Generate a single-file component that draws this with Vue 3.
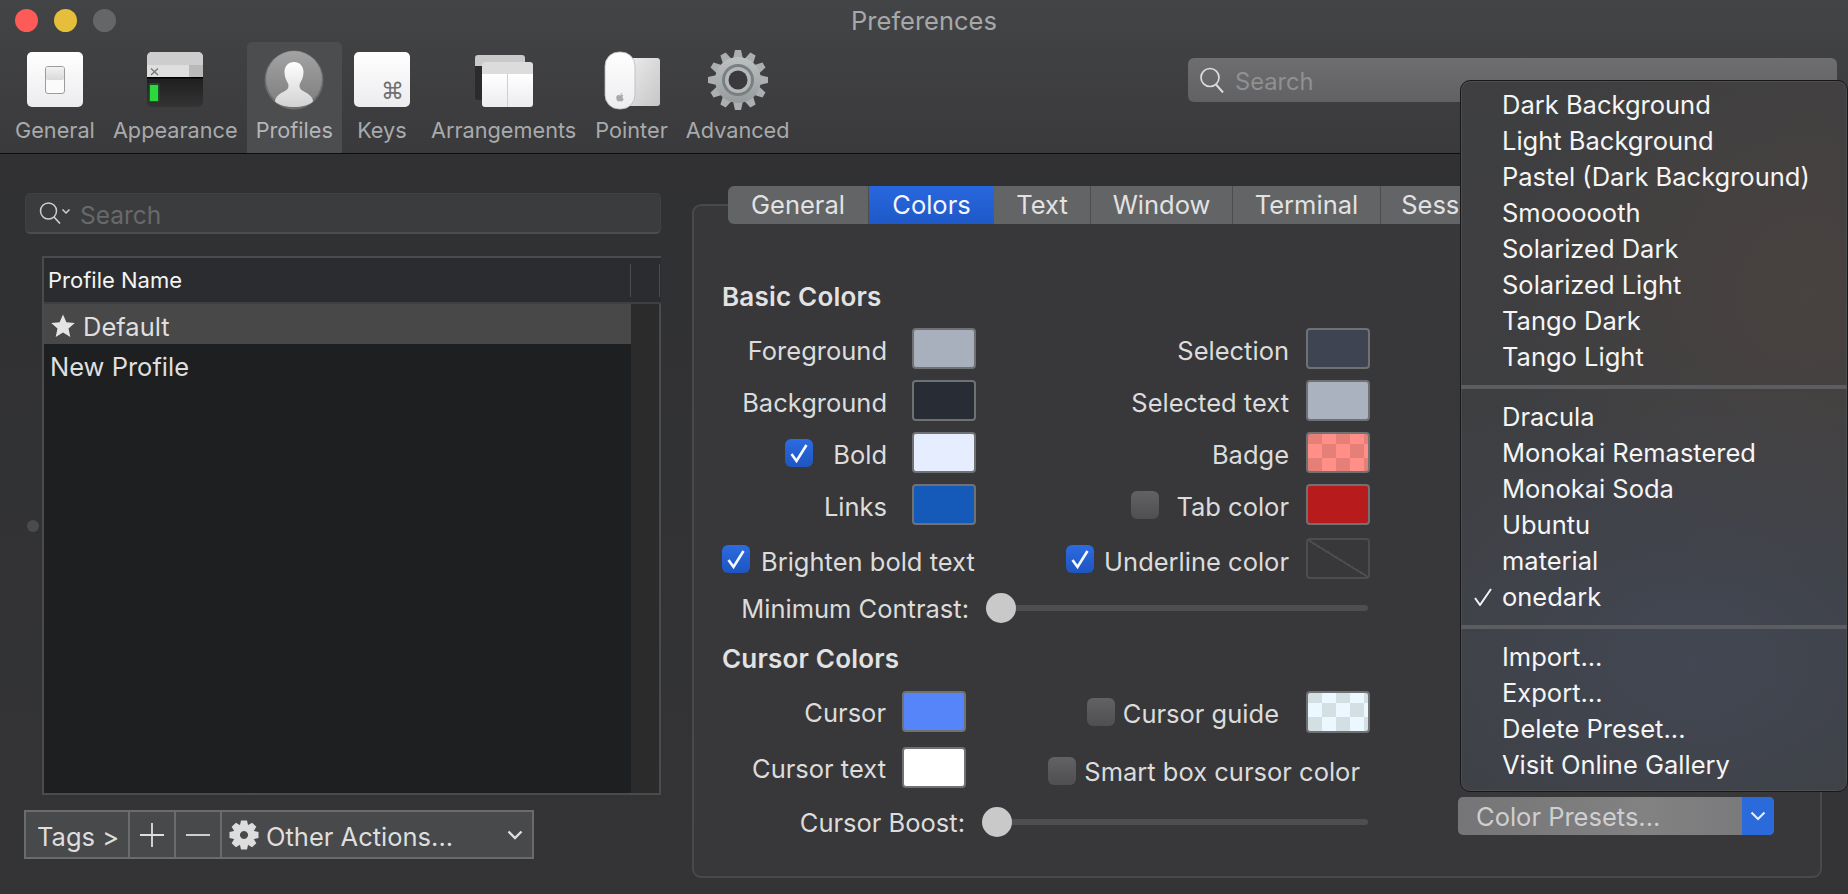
<template>
  <div class="window">
    <header class="header">
      <div class="titlebar">
        <div class="lights">
          <span class="light red"></span>
          <span class="light yellow"></span>
          <span class="light gray"></span>
        </div>
        <div class="title">Preferences</div>
      </div>
      <div class="toolbar">
        <div class="tool">
          <svg class="tool-icon" viewBox="0 0 60 60">
            <defs>
              <linearGradient id="keyWhite" x1="0" y1="0" x2="0" y2="1">
                <stop offset="0" stop-color="#ffffff" />
                <stop offset="1" stop-color="#ececef" />
              </linearGradient>
              <linearGradient id="switchTop" x1="0" y1="0" x2="0" y2="1">
                <stop offset="0" stop-color="#f2f2f2" />
                <stop offset="1" stop-color="#d9d9d9" />
              </linearGradient>
            </defs>
            <rect x="2" y="2" width="56" height="55" rx="5" fill="url(#keyWhite)" />
            <rect x="20.5" y="16.5" width="19" height="27" rx="2.5" fill="#fbfbfb" stroke="#9c9c9c" />
            <rect x="21" y="17" width="18" height="13" rx="2" fill="url(#switchTop)" />
          </svg>
          <span>General</span>
        </div>
        <div class="tool">
          <svg class="tool-icon" viewBox="0 0 60 60">
            <defs>
              <linearGradient id="termBody" x1="0" y1="0" x2="0" y2="1">
                <stop offset="0" stop-color="#1f1f1f" />
                <stop offset="1" stop-color="#333333" />
              </linearGradient>
            </defs>
            <path d="M2 28V7a5 5 0 0 1 5-5h46a5 5 0 0 1 5 5v21z" fill="#dedede" />
            <path d="M2 15V7a5 5 0 0 1 5-5h46a5 5 0 0 1 5 5v8z" fill="#cdcdcd" />
            <rect x="44" y="15" width="14" height="13" fill="#b9b9b9" />
            <path d="M6 18.500l7 6.500M13 18.500l-7 6.500" stroke="#777" stroke-width="1.300" fill="none" />
            <path d="M2 28h56v24a5 5 0 0 1-5 5H7a5 5 0 0 1-5-5z" fill="url(#termBody)" />
            <rect x="2" y="27" width="56" height="1.500" fill="#000" />
            <rect x="3.500" y="33" width="11" height="19" rx="1.500" fill="#1f7a2b" opacity=".45" />
            <rect x="5" y="35" width="8" height="16" fill="#2bd93f" />
          </svg>
          <span>Appearance</span>
        </div>
        <div class="tool active">
          <svg class="tool-icon" viewBox="0 0 60 60">
            <defs>
              <linearGradient id="avatarBg" x1="0" y1="0" x2="0" y2="1">
                <stop offset="0" stop-color="#a3a3a3" />
                <stop offset="1" stop-color="#7d7d7d" />
              </linearGradient>
              <linearGradient id="avatarFg" x1="0" y1="0" x2="0" y2="1">
                <stop offset="0" stop-color="#ffffff" />
                <stop offset="1" stop-color="#d2d2d2" />
              </linearGradient>
            </defs>
            <circle cx="30" cy="30" r="29.500" fill="#6d6d6d" />
            <circle cx="30" cy="29" r="28" fill="url(#avatarBg)" />
            <path
              d="M30 12c-5.500 0-9.500 4-9.500 10 0 4.500 1.500 8 3.500 11.500.8 1.500.6 4-.5 5.500-2.500 2.500-7 3.500-10.500 7.500-1.300 1.500-1.800 3-2 5 4.500 4 11 5.500 19 5.500s14.500-1.500 19-5.500c-.2-2-.7-3.500-2-5-3.500-4-8-5-10.500-7.500-1.100-1.500-1.300-4-.5-5.500 2-3.500 3.500-7 3.500-11.500 0-6-4-10-9.500-10z"
              fill="url(#avatarFg)"
            />
          </svg>
          <span>Profiles</span>
        </div>
        <div class="tool keys">
          <svg class="tool-icon" viewBox="0 0 60 60">
            <rect x="2" y="2" width="56" height="55" rx="5" fill="url(#keyWhite)" />
            <text x="40.500" y="49" text-anchor="middle" class="cmd">⌘</text>
          </svg>
          <span>Keys</span>
        </div>
        <div class="tool arrange">
          <svg class="tool-icon" viewBox="0 0 60 60">
            <path d="M1 8a3 3 0 0 1 3-3h44a3 3 0 0 1 3 3v12H1z" fill="#c9c9c9" />
            <path d="M1 16h12v34H4a3 3 0 0 1-3-3z" fill="#2b2b2b" />
            <path d="M8 15a3 3 0 0 1 3-3h45a3 3 0 0 1 3 3v10H8z" fill="#dcdcdc" />
            <path d="M8 24h51v30a3 3 0 0 1-3 3H11a3 3 0 0 1-3-3z" fill="url(#keyWhite)" />
            <rect x="33" y="24" width="1" height="33" fill="#cfcfcf" />
          </svg>
          <span>Arrangements</span>
        </div>
        <div class="tool">
          <svg class="tool-icon" viewBox="0 0 60 60">
            <defs>
              <linearGradient id="padFill" x1="0" y1="0" x2="1" y2="1">
                <stop offset="0" stop-color="#ececec" />
                <stop offset="1" stop-color="#c6c6c6" />
              </linearGradient>
            </defs>
            <rect x="25" y="8" width="33" height="48" rx="3" fill="url(#padFill)" />
            <rect x="3" y="2" width="30" height="57" rx="14" fill="url(#keyWhite)" stroke="#b8b8b8" stroke-width=".8" />
            <path d="M18.500 45.500c.9-.9 2.300-.8 2.800 0-1.300.9-1 2.900.4 3.400-.5 1.300-1.400 2.600-2.300 2.500-.7 0-.9-.4-1.500-.4s-.9.400-1.500.4c-1.500 0-3.300-4.500-1.200-6 1-.8 2.100-.5 3.300 0zM18.400 45c-.1-1 .8-2 1.700-2 .1 1-.8 2.100-1.700 2z" fill="#a8a8a8" />
          </svg>
          <span>Pointer</span>
        </div>
        <div class="tool">
          <svg class="tool-icon" viewBox="0 0 60 60">
            <defs>
              <linearGradient id="gearFill" x1="0" y1="0" x2="0" y2="1">
                <stop offset="0" stop-color="#bdc1c2" />
                <stop offset="1" stop-color="#979b9d" />
              </linearGradient>
            </defs>
            <g transform="translate(30 30)">
              <polygon
                v-for="deg in bigTeeth"
                :key="deg"
                points="-5,-21 -3,-30 3,-30 5,-21"
                :transform="`rotate(${deg})`"
                fill="#abafb0"
              />
              <circle r="23" fill="url(#gearFill)" />
              <circle r="16" fill="#7a7f81" />
              <circle r="13" fill="#b4b8b9" />
              <circle r="9.500" fill="#3a3a3c" />
            </g>
          </svg>
          <span>Advanced</span>
        </div>
        <div class="top-search">
          <svg class="top-search-icon" viewBox="0 0 26 26">
            <circle cx="11" cy="10.500" r="9" fill="none" stroke="#dcdcdc" stroke-width="1.700" />
            <path d="M17 17.500l7 8" stroke="#dcdcdc" stroke-width="2" fill="none" />
          </svg>
          <span>Search</span>
        </div>
      </div>
    </header>

    <main class="content">
      <section class="profiles">
        <div class="profile-search">
          <svg class="profile-search-icon" viewBox="0 0 32 22">
            <circle cx="9.500" cy="9" r="8" fill="none" stroke="#cfcfcf" stroke-width="1.500" />
            <path d="M15 15l6 6.500" stroke="#cfcfcf" stroke-width="1.700" fill="none" />
            <path d="M23.500 7.500l3.500 3.500 3.500-3.500" stroke="#cfcfcf" stroke-width="1.500" fill="none" />
          </svg>
          <span>Search</span>
        </div>
        <div class="table-wrap">
          <span class="split-dot"></span>
          <div class="table">
            <div class="table-head">
              <span>Profile Name</span>
              <i class="col-line first"></i>
              <i class="col-line"></i>
            </div>
            <div class="table-body">
              <div class="rows">
                <div class="row selected">
                  <svg class="star" viewBox="0 0 24 24">
                    <polygon points="12,0.500 15.400,8.200 23.800,9 17.500,14.600 19.300,22.900 12,18.600 4.700,22.900 6.500,14.600 0.200,9 8.600,8.200" fill="#e4e4e4" />
                  </svg>
                  <span>Default</span>
                </div>
                <div class="row">New Profile</div>
              </div>
              <div class="table-strip"></div>
            </div>
          </div>
        </div>
        <div class="actions">
          <div class="action tags">Tags &gt;</div>
          <div class="action sign">
            <svg viewBox="0 0 24 24" width="24" height="24"><path d="M12 0v24M0 12h24" stroke="#dedede" stroke-width="1.800" /></svg>
          </div>
          <div class="action sign">
            <svg viewBox="0 0 24 24" width="24" height="24"><path d="M0 12h24" stroke="#dedede" stroke-width="1.800" /></svg>
          </div>
          <div class="action other">
            <svg class="other-gear" viewBox="0 0 30 30">
              <g transform="translate(15 15)">
                <polygon
                  v-for="deg in smallTeeth"
                  :key="deg"
                  points="-4,-10 -3,-14.500 3,-14.500 4,-10"
                  :transform="`rotate(${deg})`"
                  fill="#dddddd"
                />
                <path fill-rule="evenodd" d="M0-11a11 11 0 1 0 .01 0zM0-4a4 4 0 1 1-.01 0z" fill="#dddddd" />
              </g>
            </svg>
            <span>Other Actions...</span>
            <svg class="other-chev" viewBox="0 0 16 10">
              <path d="M1.500 1.500L8 8l6.500-6.500" stroke="#dedede" stroke-width="2.400" fill="none" />
            </svg>
          </div>
        </div>
      </section>

      <section class="detail">
        <div class="tabs">
          <div v-for="tab in tabs" :key="tab.name" class="tab" :class="{ on: tab.on }" :style="{ width: tab.width + 'px' }">
            {{ tab.name }}
          </div>
        </div>
        <div class="panel-body">
          <div class="colors">
            <h3 class="heading">Basic Colors</h3>
            <div class="pairs basic">
              <div class="field">
                <span class="label">Foreground</span>
                <span class="swatch fg"></span>
              </div>
              <div class="field right">
                <span class="label">Selection</span>
                <span class="swatch sel"></span>
              </div>
              <div class="field">
                <span class="label">Background</span>
                <span class="swatch bg"></span>
              </div>
              <div class="field right">
                <span class="label">Selected text</span>
                <span class="swatch seltext"></span>
              </div>
              <div class="field">
                <span class="check on bold-check"><svg viewBox="0 0 28 28"><path d="M6.500 15l5 7L21.500 6" /></svg></span>
                <span class="label">Bold</span>
                <span class="swatch boldc"></span>
              </div>
              <div class="field right">
                <span class="label">Badge</span>
                <span class="swatch badge"></span>
              </div>
              <div class="field">
                <span class="label">Links</span>
                <span class="swatch links"></span>
              </div>
              <div class="field right">
                <span class="check"></span>
                <span class="label">Tab color</span>
                <span class="swatch tabc"></span>
              </div>
            </div>
            <div class="pairs basic under">
              <div class="field">
                <span class="check on"><svg viewBox="0 0 28 28"><path d="M6.500 15l5 7L21.500 6" /></svg></span>
                <span class="label">Brighten bold text</span>
              </div>
              <div class="field right">
                <span class="check on"><svg viewBox="0 0 28 28"><path d="M6.500 15l5 7L21.500 6" /></svg></span>
                <span class="label">Underline color</span>
                <span class="swatch none"></span>
              </div>
            </div>
            <div class="slider-row contrast">
              <span class="label">Minimum Contrast:</span>
              <div class="track"><span class="knob"></span></div>
            </div>

            <h3 class="heading cursor-heading">Cursor Colors</h3>
            <div class="pairs cursors">
              <div class="field small">
                <span class="label">Cursor</span>
                <span class="swatch cursorc"></span>
              </div>
              <div class="field guide">
                <span class="check"></span>
                <span class="label">Cursor guide</span>
                <span class="swatch guidec"></span>
              </div>
              <div class="field small">
                <span class="label">Cursor text</span>
                <span class="swatch cursortext"></span>
              </div>
              <div class="field smart">
                <span class="check"></span>
                <span class="label">Smart box cursor color</span>
              </div>
            </div>
            <div class="slider-row boost">
              <span class="label">Cursor Boost:</span>
              <div class="track"><span class="knob"></span></div>
            </div>
          </div>

          <div class="presets">
            <span class="presets-text">Color Presets...</span>
            <span class="presets-arrow">
              <svg viewBox="0 0 16 10" width="16" height="10"><path d="M1.500 1.500L8 8l6.500-6.500" stroke="#e4edff" stroke-width="2.200" fill="none" /></svg>
            </span>
          </div>
        </div>
      </section>
    </main>

    <div class="menu">
      <template v-for="(group, g) in menu" :key="g">
        <div v-if="g > 0" class="menu-sep"></div>
        <div v-for="item in group" :key="item" class="menu-item">
          <svg v-if="item === 'onedark'" class="tick" viewBox="0 0 18 18">
            <path d="M1 10l5 7L17 1" stroke="#f2f2f2" stroke-width="2" fill="none" />
          </svg>
          {{ item }}
        </div>
      </template>
    </div>
  </div>
</template>

<script setup>
const bigTeeth = Array.from({ length: 12 }, (_, i) => i * 30)
const smallTeeth = Array.from({ length: 8 }, (_, i) => i * 45)

const tabs = [
  { name: 'General', width: 141 },
  { name: 'Colors', width: 125, on: true },
  { name: 'Text', width: 97 },
  { name: 'Window', width: 142 },
  { name: 'Terminal', width: 148 },
  { name: 'Session', width: 136 }
]

const menu = [
  ['Dark Background', 'Light Background', 'Pastel (Dark Background)', 'Smoooooth', 'Solarized Dark', 'Solarized Light', 'Tango Dark', 'Tango Light'],
  ['Dracula', 'Monokai Remastered', 'Monokai Soda', 'Ubuntu', 'material', 'onedark'],
  ['Import...', 'Export...', 'Delete Preset...', 'Visit Online Gallery']
]
</script>

<style>
html,
body {
  margin: 0;
  background: #2b2b2d;
  overflow: hidden;
}
</style>

<style scoped>
.window {
  position: relative;
  width: 1848px;
  height: 894px;
  overflow: hidden;
  display: flex;
  flex-direction: column;
  background: linear-gradient(#2f3032, #343436);
  font-family: Inter, "Liberation Sans", sans-serif;
  font-size: 25.5px;
  color: #dcdcdc;
}

/* title + toolbar */
.header {
  height: 153px;
  flex-shrink: 0;
  border-bottom: 1px solid #0e0e0f;
  background: linear-gradient(#434446, #3a3a3c);
}

.titlebar {
  height: 42px;
  display: grid;
  grid-template-columns: 1fr auto 1fr;
  align-items: center;
}

.lights {
  display: flex;
  gap: 16px;
  padding-left: 15px;
  margin-top: -2px;
}

.light {
  width: 23px;
  height: 23px;
  border-radius: 50%;
}
.light.red { background: #fc5b57; }
.light.yellow { background: #e5bf3c; }
.light.gray { background: #656667; }

.title {
  color: #a6a8a9;
  font-size: 25.5px;
  margin-top: -1px;
}

.toolbar {
  display: flex;
  height: 111px;
  padding-left: 6px;
}

.tool {
  height: 111px;
  padding: 0 9px;
  display: flex;
  flex-direction: column;
  align-items: center;
  color: #a8aaab;
  font-size: 21.7px;
  box-sizing: border-box;
}

.tool.keys {
  margin: 0 1px;
}

.tool.arrange {
  margin-right: 1px;
}

.tool.active {
  background: #4c4d4f;
  border-radius: 5px 5px 0 0;
  color: #b4b6b7;
}

.tool span {
  margin-top: 4px;
  line-height: 32px;
}

.tool-icon {
  width: 60px;
  height: 60px;
  margin-top: 8px;
}

.cmd {
  font-family: "DejaVu Sans", sans-serif;
  font-size: 23px;
  fill: #6f6f6f;
}

.top-search {
  margin: 16px 11px 0 auto;
  width: 649px;
  height: 44px;
  box-sizing: border-box;
  padding-left: 11px;
  display: flex;
  align-items: center;
  gap: 10px;
  background: linear-gradient(#6e6e70, #616163);
  border-radius: 6px;
  color: #8f9091;
  font-size: 23.7px;
}

.top-search span {
  margin-top: 3px;
}

.top-search-icon {
  width: 26px;
  height: 26px;
}

/* main area */
.content {
  flex: 1;
  display: flex;
  min-height: 0;
}

.profiles {
  width: 636px;
  margin-left: 25px;
  padding-top: 39px;
}

.profile-search {
  height: 41px;
  box-sizing: border-box;
  padding-left: 13px;
  display: flex;
  align-items: center;
  gap: 9px;
  background: #3b3c3e;
  border: 1px solid #404143;
  border-bottom: 2px solid #4c4d4f;
  border-radius: 5px;
  color: #68696a;
  font-size: 24.5px;
}

.profile-search span {
  margin-top: 3px;
}

.profile-search-icon {
  width: 32px;
  height: 22px;
}

.table-wrap {
  display: flex;
  align-items: center;
  margin-top: 22px;
}

.split-dot {
  width: 12px;
  height: 12px;
  border-radius: 50%;
  background: #4a4b4d;
  margin: 0 3px 0 2px;
}

.table {
  width: 619px;
  height: 539px;
  box-sizing: border-box;
  display: flex;
  flex-direction: column;
  border: 2px solid #4a4b4d;
  border-right: none;
  background: #1e1f21;
}

.table-head {
  height: 46px;
  flex-shrink: 0;
  box-sizing: border-box;
  display: flex;
  align-items: center;
  padding-left: 4px;
  background: #2b2c2f;
  color: #f4f4f4;
  font-size: 22px;
  border-bottom: 2px solid #3e3f41;
}

.col-line {
  width: 1px;
  height: 33px;
  background: #4c4d4f;
  margin-left: auto;
}
.col-line.first {
  margin-right: 28px;
}
.col-line:last-child {
  margin-left: 0;
  margin-right: 1px;
}

.table-body {
  flex: 1;
  display: flex;
  min-height: 0;
  border-right: 2px solid #4a4b4d;
}

.rows {
  flex: 1;
}

.table-strip {
  width: 28px;
  background: #2b2b2c;
}

.row {
  height: 40px;
  box-sizing: border-box;
  display: flex;
  align-items: center;
  gap: 8px;
  padding: 4px 0 0 6px;
  font-size: 25.5px;
  color: #dfdfdf;
}

.row.selected {
  background: #484848;
}

.star {
  width: 24px;
  height: 24px;
  margin-left: 1px;
}

.actions {
  display: flex;
  width: 510px;
  height: 49px;
  box-sizing: border-box;
  margin-top: 15px;
  margin-left: -1px;
  border: 2px solid #6a6b6d;
  background: #48494b;
}

.action {
  display: flex;
  align-items: center;
  box-sizing: border-box;
  border-right: 2px solid #6a6b6d;
  font-size: 25.5px;
  color: #dedede;
}

.action span {
  margin-top: 3px;
}

.tags {
  width: 104px;
  padding: 3px 0 0 11px;
}

.sign {
  width: 46px;
  justify-content: center;
}

.other {
  flex: 1;
  border-right: none;
  padding-left: 7px;
  gap: 7px;
}

.other-gear {
  width: 30px;
  height: 30px;
}

.other-chev {
  width: 16px;
  height: 10px;
  margin-left: auto;
  margin-right: 9px;
}

/* right panel */
.detail {
  width: 1130px;
  height: 674px;
  box-sizing: border-box;
  margin: 50px 0 0 31px;
  background: #38383a;
  border: 2px solid #48494b;
  border-radius: 9px;
}

.tabs {
  display: flex;
  height: 38px;
  margin: -20px 0 0 34px;
}

.tab {
  box-sizing: border-box;
  display: flex;
  align-items: center;
  justify-content: center;
  padding-bottom: 2px;
  background: #636466;
  border-right: 1px solid #4c4d4f;
  font-size: 25.5px;
  color: #e2e2e2;
  flex-shrink: 0;
}
.tab:first-child {
  border-radius: 6px 0 0 6px;
}
.tab.on {
  background: linear-gradient(#2767de, #1f59c8);
  color: #f2f6ff;
  border-right: none;
}

.panel-body {
  display: flex;
  height: 634px;
}

.colors {
  width: 647px;
  margin-left: 29px;
  flex-shrink: 0;
}

.heading {
  margin: 0 0 0 -1px;
  height: 30px;
  line-height: 30px;
  font-size: 26px;
  letter-spacing: 0.2px;
  font-weight: 600;
  color: #e2e2e2;
}

.colors > .heading:first-child {
  margin-top: 58px;
  margin-bottom: 11px;
}

.pairs {
  display: grid;
  row-gap: 1px;
}
.pairs.basic {
  grid-template-columns: 253px 394px;
}
.pairs.under {
  margin-top: 3px;
}
.pairs.cursors {
  grid-template-columns: 243px 404px;
  margin-top: 12px;
  row-gap: 5px;
}

.field {
  height: 51px;
  display: flex;
  align-items: center;
  justify-content: flex-end;
  gap: 25px;
}
.field.right {
  gap: 17px;
}
.field.small {
  gap: 16px;
}
.field.small .label {
  margin-top: 2px;
}
.field.guide {
  gap: 8px;
}
.field.guide .swatch {
  margin-left: 19px;
  height: 42px;
}
.field.smart {
  gap: 8px;
  padding: 5px 10px 0 0;
  box-sizing: border-box;
}

.label {
  margin-top: 3px;
  white-space: nowrap;
}
.under .label {
  margin-top: 5px;
}
.under .field {
  gap: 11px;
}
.under .field:first-child {
  justify-content: flex-start;
  margin-left: -1px;
}
.under .field.right {
  gap: 10px;
}
.under .field.right .swatch {
  margin-left: 7px;
}
.bold-check {
  margin-right: -5px;
}

.swatch {
  width: 64px;
  height: 41px;
  box-sizing: border-box;
  border: 2px solid #707173;
  border-radius: 4px;
  flex-shrink: 0;
}
.swatch.fg { background: #a9b0bd; }
.swatch.sel { background: #3e4451; }
.swatch.bg { background: #282c34; }
.swatch.seltext { background: #abb2bf; }
.swatch.boldc { background: #e6edff; }
.swatch.links { background: #155ab9; }
.swatch.tabc { background: #b81b1b; }
.swatch.cursorc { background: #5685fa; }
.swatch.cursortext { background: #ffffff; }
.swatch.badge {
  background: conic-gradient(#ff8f87 25%, #e57f78 0 50%, #ff8f87 0 75%, #e57f78 0) 0 -4px / 28px 28px;
}
.swatch.guidec {
  background: conic-gradient(#ebf8ff 25%, #d4dfe4 0 50%, #ebf8ff 0 75%, #d4dfe4 0) 0 -4px / 28px 28px;
}
.swatch.none {
  border-color: #4c4d4f;
  background: linear-gradient(to top right, transparent calc(50% - 1px), #4c4d4f calc(50% - 1px), #4c4d4f calc(50% + 1px), transparent calc(50% + 1px));
}

.check {
  width: 28px;
  height: 28px;
  border-radius: 6px;
  flex-shrink: 0;
  background: linear-gradient(#626264, #4f4f51);
  margin-top: 1px;
}
.check.on {
  background: linear-gradient(#2c6be2, #1e55c0);
}
.check svg {
  display: block;
}
.check path {
  fill: none;
  stroke: #f6f9ff;
  stroke-width: 2.600;
}

.slider-row {
  display: flex;
  align-items: center;
  gap: 17px;
  height: 30px;
}
.slider-row .label {
  margin-top: 0;
  text-align: right;
}
.contrast {
  margin-top: 9px;
}
.contrast .label {
  width: 246px;
}
.contrast .track {
  width: 382px;
}
.boost {
  margin-top: 14px;
}
.boost .label {
  width: 242px;
}
.boost .track {
  width: 386px;
}

.track {
  height: 6px;
  display: flex;
  align-items: center;
  border-radius: 3px;
  background: #4e4e50;
}

.knob {
  width: 30px;
  height: 30px;
  border-radius: 50%;
  background: #c9c9c9;
  flex-shrink: 0;
}

.cursor-heading {
  margin-top: 21px;
}

.presets {
  display: flex;
  align-self: flex-end;
  width: 316px;
  height: 38px;
  margin: 0 0 23px 88px;
  border-radius: 5px;
  overflow: hidden;
  flex-shrink: 0;
  background: linear-gradient(90deg, #757577, #828283 60%, #777779);
  color: #cfcfcf;
  font-size: 25.5px;
}

.presets-text {
  flex: 1;
  display: flex;
  align-items: center;
  padding-left: 18px;
}

.presets-arrow {
  width: 32px;
  display: flex;
  align-items: center;
  justify-content: center;
  background: #2b6adb;
}

/* popup menu */
.menu {
  position: absolute;
  left: 1460px;
  top: 80px;
  width: 388px;
  height: 712px;
  box-sizing: border-box;
  padding: 6px 0;
  border: 1px solid #17181a;
  border-radius: 10px;
  background:
    radial-gradient(420px 300px at 60% 82%, rgba(72, 78, 98, 0.55), transparent),
    radial-gradient(300px 300px at 90% 30%, rgba(84, 70, 62, 0.45), transparent),
    linear-gradient(#3f3f41, #3c3e40);
  color: #f5f5f5;
  font-size: 25.5px;
  box-shadow: inset 0 0 0 1px #4d4e50;
}

.menu-item {
  position: relative;
  height: 36px;
  line-height: 36px;
  padding-left: 41px;
  white-space: nowrap;
}

.tick {
  position: absolute;
  left: 13px;
  top: 9px;
  width: 18px;
  height: 18px;
}

.menu-sep {
  height: 4px;
  margin: 10px 0;
  background: #5c5d61;
}
</style>
